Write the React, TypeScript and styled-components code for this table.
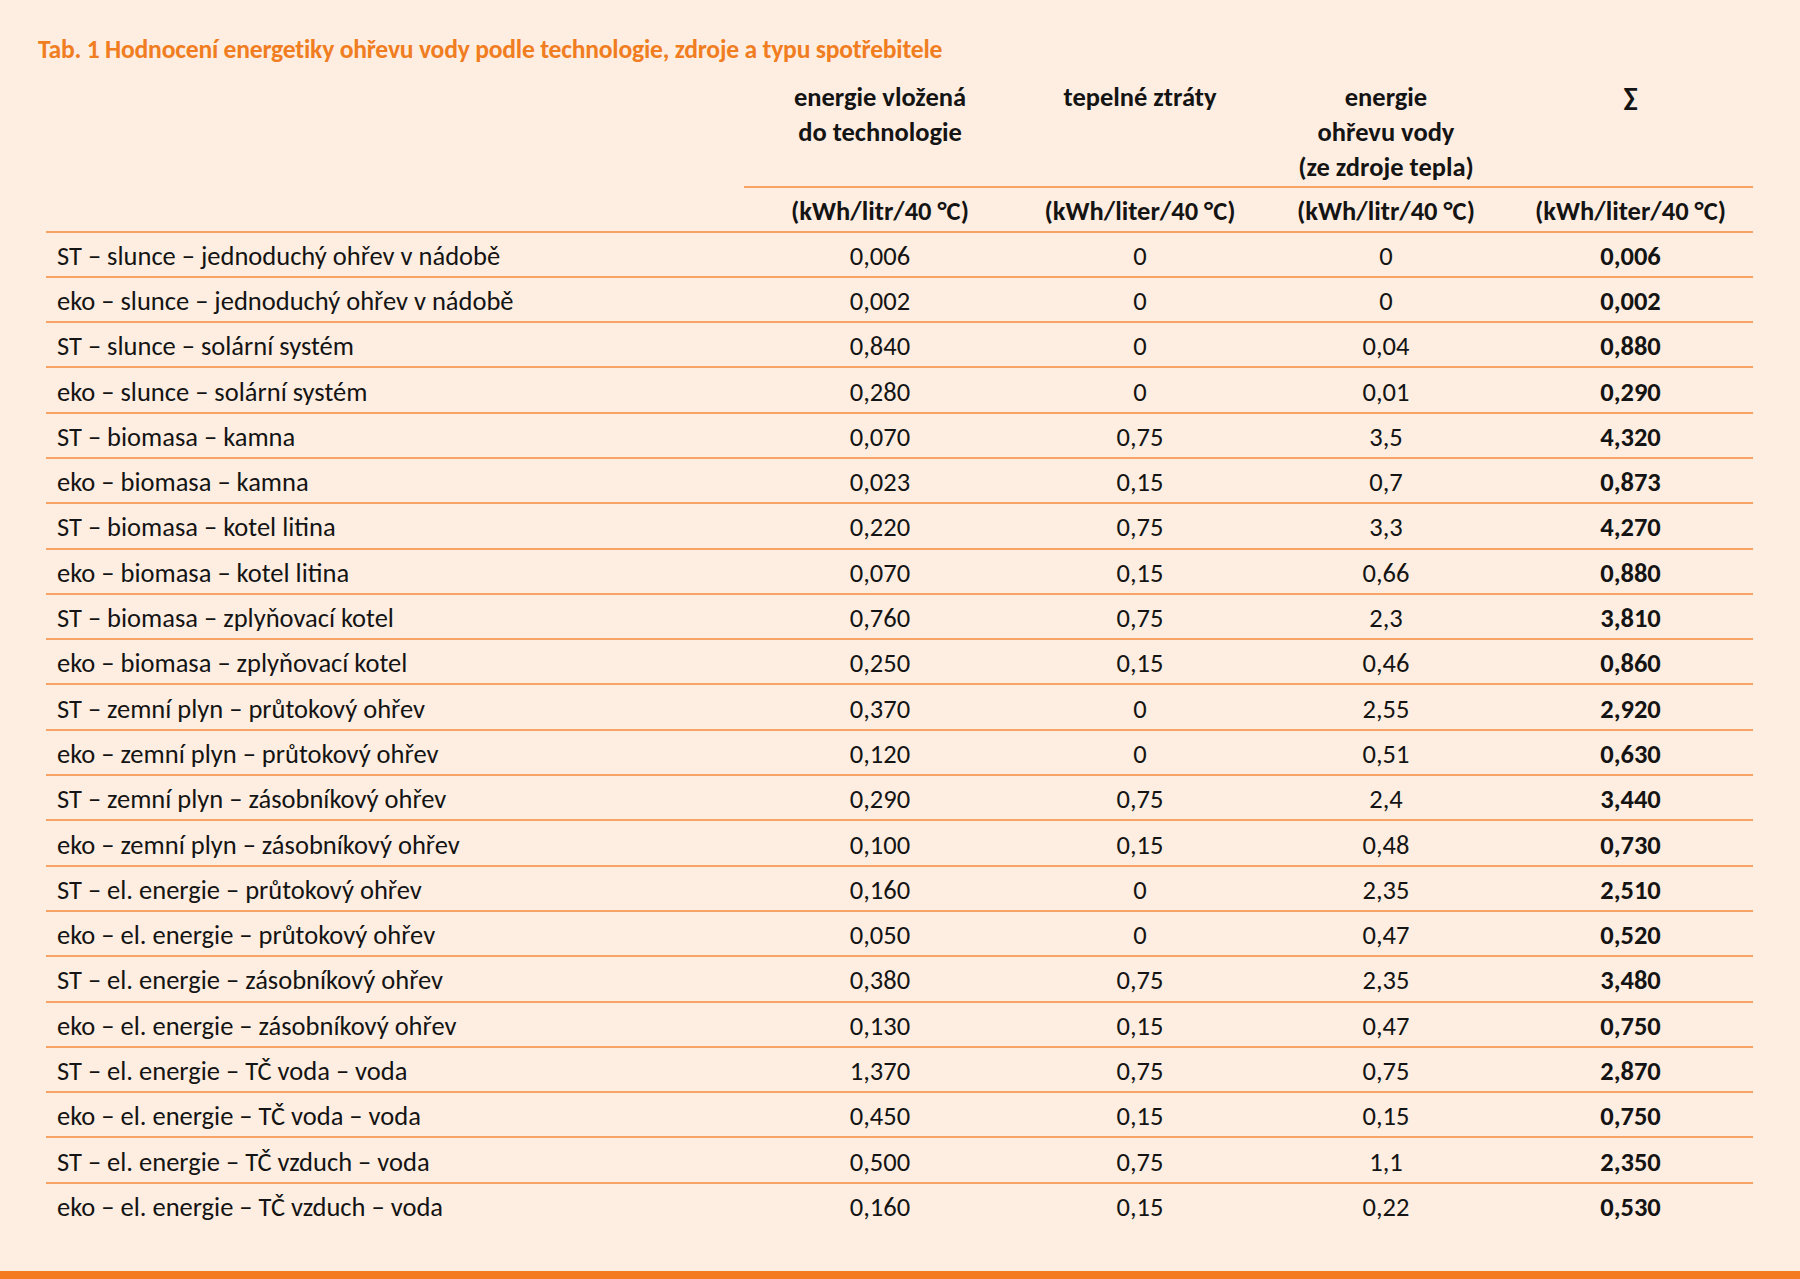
import React from "react";
import styled, { createGlobalStyle } from "styled-components";

const GlobalStyle = createGlobalStyle`
  html, body {
    margin: 0;
    padding: 0;
    background: #feeee1;
  }
  body {
    font-family: "Carlito", "Lato", "Liberation Sans", sans-serif;
    color: #141414;
  }
`;

type Row = [string, string, string, string, string];

const rows: Row[] = [
  ["ST – slunce – jednoduchý ohřev v nádobě", "0,006", "0", "0", "0,006"],
  ["eko – slunce – jednoduchý ohřev v nádobě", "0,002", "0", "0", "0,002"],
  ["ST – slunce – solární systém", "0,840", "0", "0,04", "0,880"],
  ["eko – slunce – solární systém", "0,280", "0", "0,01", "0,290"],
  ["ST – biomasa – kamna", "0,070", "0,75", "3,5", "4,320"],
  ["eko – biomasa – kamna", "0,023", "0,15", "0,7", "0,873"],
  ["ST – biomasa – kotel litina", "0,220", "0,75", "3,3", "4,270"],
  ["eko – biomasa – kotel litina", "0,070", "0,15", "0,66", "0,880"],
  ["ST – biomasa – zplyňovací kotel", "0,760", "0,75", "2,3", "3,810"],
  ["eko – biomasa – zplyňovací kotel", "0,250", "0,15", "0,46", "0,860"],
  ["ST – zemní plyn – průtokový ohřev", "0,370", "0", "2,55", "2,920"],
  ["eko – zemní plyn – průtokový ohřev", "0,120", "0", "0,51", "0,630"],
  ["ST – zemní plyn – zásobníkový ohřev", "0,290", "0,75", "2,4", "3,440"],
  ["eko – zemní plyn – zásobníkový ohřev", "0,100", "0,15", "0,48", "0,730"],
  ["ST – el. energie – průtokový ohřev", "0,160", "0", "2,35", "2,510"],
  ["eko – el. energie – průtokový ohřev", "0,050", "0", "0,47", "0,520"],
  ["ST – el. energie – zásobníkový ohřev", "0,380", "0,75", "2,35", "3,480"],
  ["eko – el. energie – zásobníkový ohřev", "0,130", "0,15", "0,47", "0,750"],
  ["ST – el. energie – TČ voda – voda", "1,370", "0,75", "0,75", "2,870"],
  ["eko – el. energie – TČ voda – voda", "0,450", "0,15", "0,15", "0,750"],
  ["ST – el. energie – TČ vzduch – voda", "0,500", "0,75", "1,1", "2,350"],
  ["eko – el. energie – TČ vzduch – voda", "0,160", "0,15", "0,22", "0,530"],
];

const units = [
  "(kWh/litr/40 °C)",
  "(kWh/liter/40 °C)",
  "(kWh/litr/40 °C)",
  "(kWh/liter/40 °C)",
];

export default function App() {
  return (
    <Page>
      <GlobalStyle />
      <Title>
        Tab. 1 Hodnocení energetiky ohřevu vody podle technologie, zdroje a
        typu spotřebitele
      </Title>
      <Table>
        <HeadRow>
          <Blank />
          <HeadCell>
            energie vložená
            <br />
            do technologie
          </HeadCell>
          <HeadCell>tepelné ztráty</HeadCell>
          <HeadCell>
            energie
            <br />
            ohřevu vody
            <br />
            (ze zdroje tepla)
          </HeadCell>
          <HeadCell>∑</HeadCell>
        </HeadRow>
        <UnitRow>
          <Blank />
          {units.map((u, i) => (
            <UnitCell key={i}>{u}</UnitCell>
          ))}
        </UnitRow>
        {rows.map((r, i) => (
          <DataRow key={i} $last={i === rows.length - 1}>
            <Label>{r[0]}</Label>
            <Value>{r[1]}</Value>
            <Value>{r[2]}</Value>
            <Value>{r[3]}</Value>
            <Value $bold>{r[4]}</Value>
          </DataRow>
        ))}
      </Table>
      <Spacer />
      <BottomBar />
    </Page>
  );
}

const Page = styled.div`
  height: 1279px;
  display: flex;
  flex-direction: column;
  overflow: hidden;
`;

const Title = styled.h1`
  margin: 0;
  padding: 36px 0 0 38px;
  font-size: 25.6px;
  line-height: 28px;
  font-weight: 700;
  color: #f07d1f;
  letter-spacing: -0.2px;
`;

const Table = styled.div`
  margin-left: 46px;
  width: 1707px;
`;

const Grid = styled.div`
  display: grid;
  grid-template-columns: 698px 272px 248px 244px 245px;
`;

const HeadRow = styled(Grid)`
  padding-top: 14px;
`;

const Blank = styled.div``;

const HeadCell = styled.div`
  text-align: center;
  font-weight: 700;
  font-size: 26.5px;
  line-height: 35px;
  padding-top: 2px;
  border-bottom: 2px solid #f6a365;
  height: 106px;
`;

const UnitRow = styled(Grid)`
  height: 44.5px;
  box-sizing: border-box;
  border-bottom: 2px solid #f6a365;
  align-items: center;
  padding-top: 4px;
`;

const UnitCell = styled.div`
  text-align: center;
  font-weight: 700;
  font-size: 26.5px;
`;

const DataRow = styled(Grid)<{ $last?: boolean }>`
  height: 45.3px;
  box-sizing: border-box;
  align-items: center;
  padding-top: 3px;
  border-bottom: 2px solid ${(p) => (p.$last ? "transparent" : "#f6a365")};
  font-size: 26.5px;
`;

const Label = styled.div`
  padding-left: 11px;
  white-space: nowrap;
`;

const Value = styled.div<{ $bold?: boolean }>`
  text-align: center;
  font-weight: ${(p) => (p.$bold ? 700 : 400)};
`;

const Spacer = styled.div`
  flex: 1;
`;

const BottomBar = styled.div`
  height: 8px;
  background: #f47b20;
`;
